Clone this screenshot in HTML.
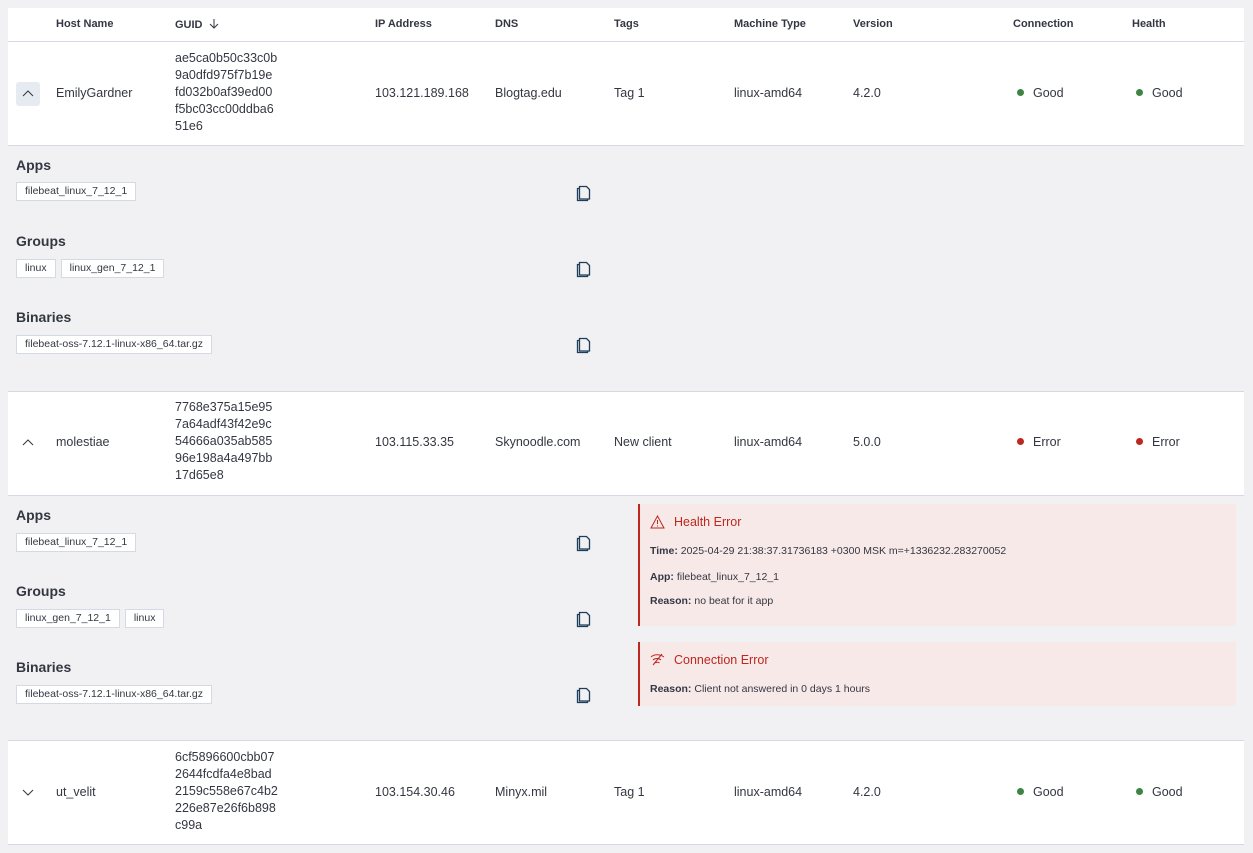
<!DOCTYPE html>
<html><head><meta charset="utf-8">
<style>
*{box-sizing:border-box;margin:0;padding:0}
body{width:1253px;height:853px;overflow:hidden;background:#f1f1f3;font-family:"Liberation Sans",sans-serif;color:#343741;font-size:12.5px;position:relative}
.w{position:absolute;left:8px;width:1236px;background:#fff;border-bottom:1px solid #d3dae6}
.a{position:absolute;white-space:nowrap}
.h{font-size:11px;font-weight:bold;top:18px}
.g{line-height:17px}
.sec{font-weight:bold;font-size:14px;color:#343741}
.tags{position:absolute;display:flex;gap:5px}
.tag{height:19px;border:1px solid #d3dae6;background:#fff;font-size:10.5px;line-height:17px;padding:0 8px;white-space:nowrap}
.dot{display:inline-block;width:7px;height:7px;border-radius:50%;margin-right:9px;vertical-align:1px}
.err{position:absolute;left:638px;width:598px;background:#f8e9e9;border-left:2px solid #bd271e}
.et{position:absolute;left:34px;color:#bd271e;font-size:12.5px}
.el{position:absolute;left:10px;font-size:10.5px;white-space:nowrap}
.el b{font-weight:bold}
</style></head><body>
<div class="w" style="top:8px;height:34px"></div>
<div class="a h" style="left:56px">Host Name</div>
<div class="a h" style="left:175px">GUID <svg width="12" height="12" viewBox="0 0 12 12" style="vertical-align:-2px;margin-left:2px"><path d="M6 1v9M2 6l4 4 4-4" stroke="#343741" fill="none" stroke-width="1"/></svg></div>
<div class="a h" style="left:375px">IP Address</div>
<div class="a h" style="left:495px">DNS</div>
<div class="a h" style="left:614px">Tags</div>
<div class="a h" style="left:734px">Machine Type</div>
<div class="a h" style="left:853px">Version</div>
<div class="a h" style="left:1013px">Connection</div>
<div class="a h" style="left:1132px">Health</div>

<!-- row 1 -->
<div class="w" style="top:42px;height:104px"></div>
<div class="a" style="left:16px;top:82px;width:24px;height:24px;background:#e6ebf1;border-radius:3px"></div>
<svg class="a" style="left:22px;top:88px" width="12" height="12" viewBox="0 0 12 12"><path d="M1 8l5-5 5 5" stroke="#343741" fill="none"/></svg>
<div class="a" style="left:56px;top:86px">EmilyGardner</div>
<div class="a g" style="left:175px;top:50px">ae5ca0b50c33c0b<br>9a0dfd975f7b19e<br>fd032b0af39ed00<br>f5bc03cc00ddba6<br>51e6</div>
<div class="a" style="left:375px;top:86px">103.121.189.168</div>
<div class="a" style="left:495px;top:86px">Blogtag.edu</div>
<div class="a" style="left:614px;top:86px">Tag 1</div>
<div class="a" style="left:734px;top:86px">linux-amd64</div>
<div class="a" style="left:853px;top:86px">4.2.0</div>
<div class="a" style="left:1017px;top:86px"><span class="dot" style="background:#3d8542"></span>Good</div>
<div class="a" style="left:1136px;top:86px"><span class="dot" style="background:#3d8542"></span>Good</div>

<div class="a sec" style="left:16px;top:157px">Apps</div>
<div class="tags" style="left:16px;top:182px"><div class="tag">filebeat_linux_7_12_1</div></div>
<div class="a sec" style="left:16px;top:233px">Groups</div>
<div class="tags" style="left:16px;top:259px"><div class="tag">linux</div><div class="tag">linux_gen_7_12_1</div></div>
<div class="a sec" style="left:16px;top:309px">Binaries</div>
<div class="tags" style="left:16px;top:335px"><div class="tag">filebeat-oss-7.12.1-linux-x86_64.tar.gz</div></div>

<!-- row 2 -->
<div class="w" style="top:391px;height:105px;border-top:1px solid #d3dae6"></div>
<svg class="a" style="left:22px;top:437px" width="12" height="12" viewBox="0 0 12 12"><path d="M1 8l5-5 5 5" stroke="#343741" fill="none"/></svg>
<div class="a" style="left:56px;top:435px">molestiae</div>
<div class="a g" style="left:175px;top:399px">7768e375a15e95<br>7a64adf43f42e9c<br>54666a035ab585<br>96e198a4a497bb<br>17d65e8</div>
<div class="a" style="left:375px;top:435px">103.115.33.35</div>
<div class="a" style="left:495px;top:435px">Skynoodle.com</div>
<div class="a" style="left:614px;top:435px">New client</div>
<div class="a" style="left:734px;top:435px">linux-amd64</div>
<div class="a" style="left:853px;top:435px">5.0.0</div>
<div class="a" style="left:1017px;top:435px"><span class="dot" style="background:#bd271e"></span>Error</div>
<div class="a" style="left:1136px;top:435px"><span class="dot" style="background:#bd271e"></span>Error</div>

<div class="a sec" style="left:16px;top:507px">Apps</div>
<div class="tags" style="left:16px;top:533px"><div class="tag">filebeat_linux_7_12_1</div></div>
<div class="a sec" style="left:16px;top:583px">Groups</div>
<div class="tags" style="left:16px;top:609px"><div class="tag">linux_gen_7_12_1</div><div class="tag">linux</div></div>
<div class="a sec" style="left:16px;top:659px">Binaries</div>
<div class="tags" style="left:16px;top:685px"><div class="tag">filebeat-oss-7.12.1-linux-x86_64.tar.gz</div></div>

<div class="err" style="top:504px;height:122px">
<svg class="a" style="left:10px;top:11px" width="15" height="14" viewBox="0 0 15 14"><path d="M7.5 1L14 13H1z" fill="none" stroke="#bd271e"/><path d="M7.5 5v4M7.5 10.5v1" stroke="#bd271e"/></svg>
<div class="et" style="top:11px">Health Error</div>
<div class="el" style="top:41px"><b>Time:</b> 2025-04-29 21:38:37.31736183 +0300 MSK m=+1336232.283270052</div>
<div class="el" style="top:67px"><b>App:</b> filebeat_linux_7_12_1</div>
<div class="el" style="top:91px"><b>Reason:</b> no beat for it app</div>
</div>
<div class="err" style="top:642px;height:64px">
<svg class="a" style="left:10px;top:11px" width="15" height="13" viewBox="0 0 15 13"><path d="M1 4c3-3 9-3 13 0M3 7c2-2 6-2 8 0M5.5 10c1-1 3-1 4 0M12 1L3 12" fill="none" stroke="#bd271e"/></svg>
<div class="et" style="top:11px">Connection Error</div>
<div class="el" style="top:41px"><b>Reason:</b> Client not answered in 0 days 1 hours</div>
</div>

<!-- row 3 -->
<div class="w" style="top:740px;height:105px;border-top:1px solid #d3dae6"></div>
<svg class="a" style="left:22px;top:786px" width="12" height="12" viewBox="0 0 12 12"><path d="M1 4l5 5 5-5" stroke="#343741" fill="none"/></svg>
<div class="a" style="left:56px;top:785px">ut_velit</div>
<div class="a g" style="left:175px;top:749px">6cf5896600cbb07<br>2644fcdfa4e8bad<br>2159c558e67c4b2<br>226e87e26f6b898<br>c99a</div>
<div class="a" style="left:375px;top:785px">103.154.30.46</div>
<div class="a" style="left:495px;top:785px">Minyx.mil</div>
<div class="a" style="left:614px;top:785px">Tag 1</div>
<div class="a" style="left:734px;top:785px">linux-amd64</div>
<div class="a" style="left:853px;top:785px">4.2.0</div>
<div class="a" style="left:1017px;top:785px"><span class="dot" style="background:#3d8542"></span>Good</div>
<div class="a" style="left:1136px;top:785px"><span class="dot" style="background:#3d8542"></span>Good</div>

<!-- copy icons -->
<svg class="a" style="left:576px;top:185px" width="16" height="17" viewBox="0 0 16 17"><path d="M3 3.5H1.5v12h10V14" fill="none" stroke="#1d3d5a" stroke-width="1.3"/><path d="M3.5 1.5h7l3 3v9.5h-10z" fill="none" stroke="#1d3d5a" stroke-width="1.3"/></svg>
<svg class="a" style="left:576px;top:261px" width="16" height="17" viewBox="0 0 16 17"><path d="M3 3.5H1.5v12h10V14" fill="none" stroke="#1d3d5a" stroke-width="1.3"/><path d="M3.5 1.5h7l3 3v9.5h-10z" fill="none" stroke="#1d3d5a" stroke-width="1.3"/></svg>
<svg class="a" style="left:576px;top:337px" width="16" height="17" viewBox="0 0 16 17"><path d="M3 3.5H1.5v12h10V14" fill="none" stroke="#1d3d5a" stroke-width="1.3"/><path d="M3.5 1.5h7l3 3v9.5h-10z" fill="none" stroke="#1d3d5a" stroke-width="1.3"/></svg>
<svg class="a" style="left:576px;top:535px" width="16" height="17" viewBox="0 0 16 17"><path d="M3 3.5H1.5v12h10V14" fill="none" stroke="#1d3d5a" stroke-width="1.3"/><path d="M3.5 1.5h7l3 3v9.5h-10z" fill="none" stroke="#1d3d5a" stroke-width="1.3"/></svg>
<svg class="a" style="left:576px;top:611px" width="16" height="17" viewBox="0 0 16 17"><path d="M3 3.5H1.5v12h10V14" fill="none" stroke="#1d3d5a" stroke-width="1.3"/><path d="M3.5 1.5h7l3 3v9.5h-10z" fill="none" stroke="#1d3d5a" stroke-width="1.3"/></svg>
<svg class="a" style="left:576px;top:687px" width="16" height="17" viewBox="0 0 16 17"><path d="M3 3.5H1.5v12h10V14" fill="none" stroke="#1d3d5a" stroke-width="1.3"/><path d="M3.5 1.5h7l3 3v9.5h-10z" fill="none" stroke="#1d3d5a" stroke-width="1.3"/></svg>
</body></html>
